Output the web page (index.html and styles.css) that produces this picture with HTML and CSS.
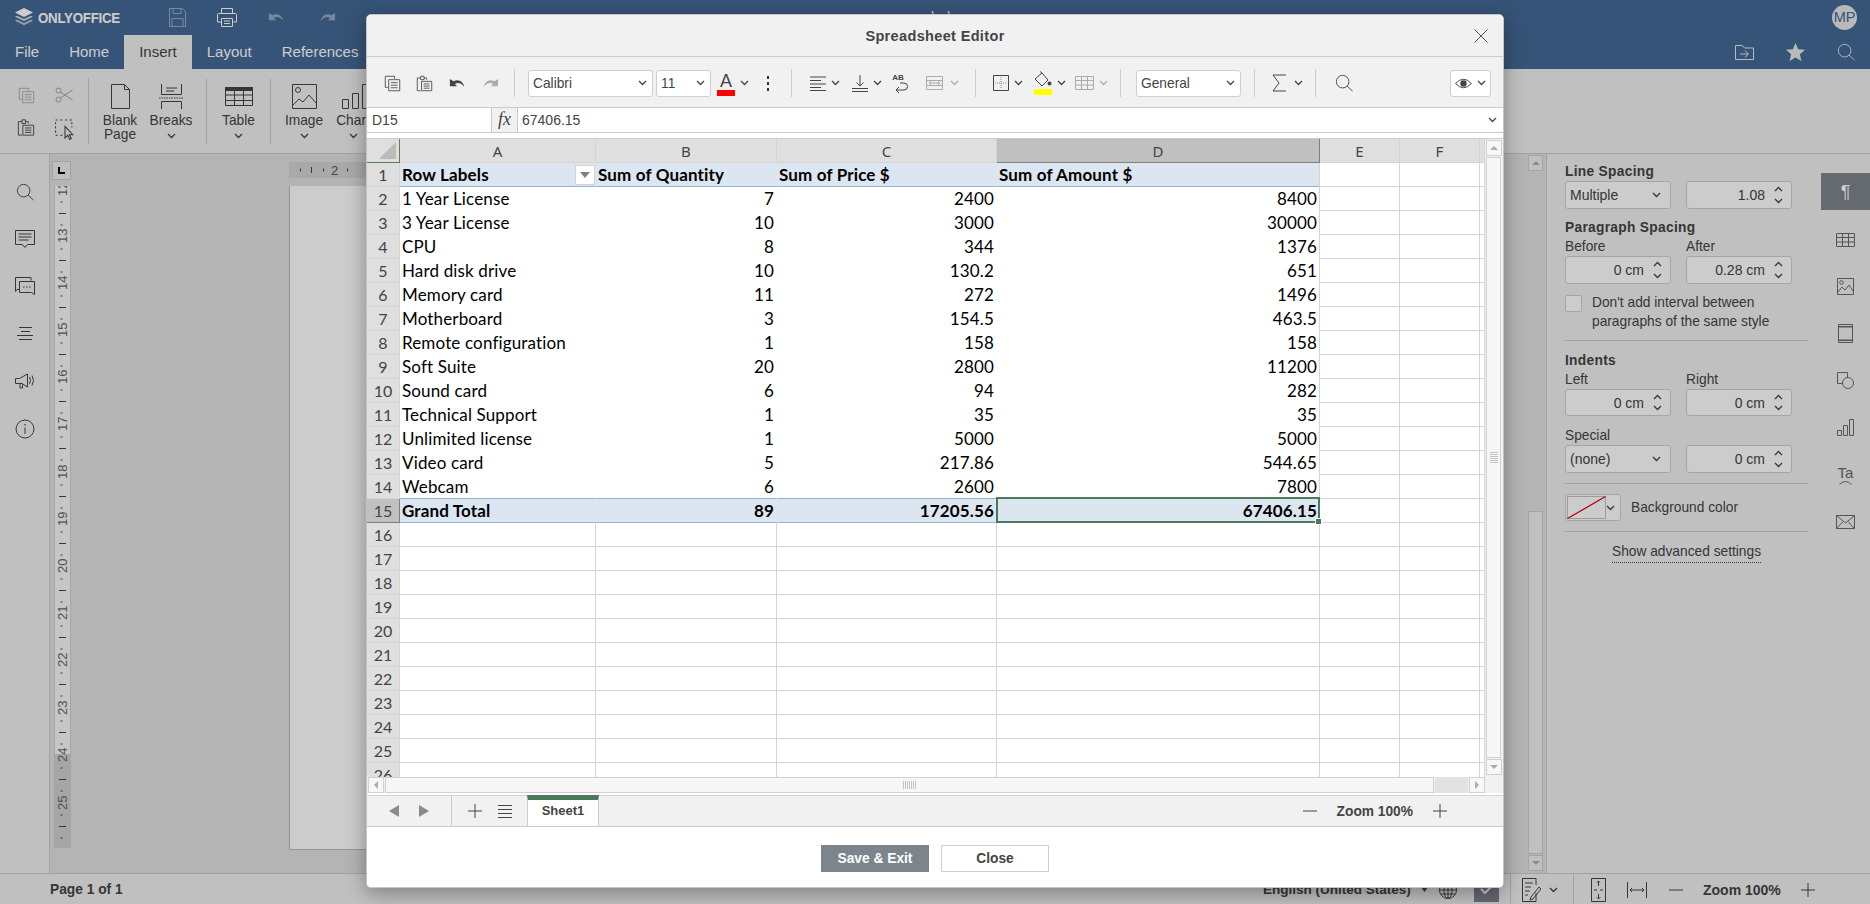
FILE: index.html
```html
<!DOCTYPE html>
<html lang="en">
<head>
<meta charset="utf-8">
<title>ONLYOFFICE Document Editor</title>
<link rel="stylesheet" href="styles.css">
</head>
<body>
<svg class="defs" width="0" height="0" aria-hidden="true">
  <defs>
    <symbol id="chev" viewBox="0 0 9 6"><path d="M1 1l3.500 3.500L8 1" fill="none" stroke="currentColor" stroke-width="1.300"/></symbol>
    <symbol id="chev-up" viewBox="0 0 9 6"><path d="M1 5l3.500-3.500L8 5" fill="none" stroke="currentColor" stroke-width="1.300"/></symbol>
    <symbol id="copy" viewBox="0 0 20 20"><path d="M1.500 1.500h11v3M1.500 1.500v13h3M5.500 5.500h13v13h-13zM8 9h8M8 12h8M8 15h8" fill="none" stroke="currentColor"/></symbol>
    <symbol id="paste" viewBox="0 0 20 20"><path d="M5.500 3.500h-4v15h4M9.500 3.500h3v2M5.500 1.500h4v4h-4zM6.500 7.500h12v11h-12zM9 10.500h7M9 13h7M9 15.500h7" fill="none" stroke="currentColor"/></symbol>
    <symbol id="undo" viewBox="0 0 20 14"><path d="M1 2v8h8L6.500 7.500C10 5.500 14 6.500 17 11 16 5 11 1.500 5 4.500z" fill="currentColor"/></symbol>
    <symbol id="redo" viewBox="0 0 20 14"><path d="M19 2v8h-8l2.500-2.500C10 5.500 6 6.500 3 11 4 5 9 1.500 15 4.500z" fill="currentColor"/></symbol>
    <symbol id="search" viewBox="0 0 20 20"><circle cx="8.500" cy="8.500" r="7" fill="none" stroke="currentColor"/><path d="M13.500 13.500l6 5.500" stroke="currentColor" fill="none"/></symbol>
    <symbol id="plus" viewBox="0 0 14 14"><path d="M7 0v14M0 7h14" stroke="currentColor" fill="none"/></symbol>
    <symbol id="minus" viewBox="0 0 14 14"><path d="M0 7h14" stroke="currentColor" fill="none"/></symbol>
  </defs>
</svg>

<div class="app">
  <header class="head">
    <div class="head-top">
      <div class="logo">
        <svg width="18" height="20" viewBox="0 0 18 20"><path d="M9 0l9 4.500L9 9 0 4.500z" fill="#fff"/><path d="M2 7.700L9 11l7-3.300 2 1L9 13 0 8.700z" fill="#d8dfe8"/><path d="M2 11.700L9 15l7-3.300 2 1L9 17.200 0 12.700z" fill="#b9c5d4"/></svg>
        <span class="logo-text">ONLYOFFICE</span>
      </div>
      <div class="quick">
        <svg class="dimmed" width="17" height="19" viewBox="0 0 17 19"><path d="M.5.5h13l3 3v15H.5zM4 .5v5h8v-5M3 18.500v-8h11v8" fill="none" stroke="currentColor"/></svg>
        <svg width="20" height="19" viewBox="0 0 20 19"><path d="M4.500 6V.5h11V6M4.500 14h-4V6.500q0-1 1-1h17q1 0 1 1V14h-4M4.500 10.500h11v8h-11zM7 13h6M7 15.500h6" fill="none" stroke="currentColor"/></svg>
        <svg class="dimmed" width="18" height="13"><use href="#undo"/></svg>
        <svg class="dimmed" width="18" height="13"><use href="#redo"/></svg>
      </div>
      <div class="doc-title">b.docx</div>
      <div class="avatar">MP</div>
    </div>
    <div class="head-tabs">
      <nav class="tabs">
        <span class="tab">File</span>
        <span class="tab">Home</span>
        <span class="tab active">Insert</span>
        <span class="tab">Layout</span>
        <span class="tab">References</span>
      </nav>
      <div class="head-right">
        <svg width="19" height="16" viewBox="0 0 19 16"><path d="M.5 15.500V1.500h7l2 2.500h9v11.500zM5 10h8M10 6.500l3.500 3.500L10 13.500" fill="none" stroke="currentColor"/></svg>
        <svg width="19" height="18" viewBox="0 0 19 18"><path d="M9.500 0l2.700 6.200 6.800.6-5.100 4.500 1.500 6.700-5.900-3.500L3.600 18l1.500-6.700L0 6.800l6.800-.6z" fill="currentColor"/></svg>
        <svg width="18" height="18"><use href="#search"/></svg>
      </div>
    </div>
  </header>

  <section class="ribbon">
    <div class="rgroup clip">
      <svg class="faded" width="17" height="17"><use href="#copy"/></svg>
      <svg class="faded" width="19" height="16" viewBox="0 0 18 16"><circle cx="3" cy="3.500" r="2.500" fill="none" stroke="currentColor"/><circle cx="3" cy="12.500" r="2.500" fill="none" stroke="currentColor"/><path d="M5 5l12 8M5 11L17 3" fill="none" stroke="currentColor"/></svg>
      <svg class="rpaste" width="18" height="19"><use href="#paste"/></svg>
      <svg width="19" height="21" viewBox="0 0 18 20"><path d="M.5 1h2M5 1h2M9.500 1h2M14 1h2M.5 3v2M.5 7v2M.5 11v2M16 3v2M16 7v1M.5 15.500h2M5 15.500h2" stroke="currentColor" fill="none"/><path d="M9.500 7v11l2.500-2.500 2 4 1.500-1-2-3.500h3.500z" fill="#f1f1f1" stroke="currentColor"/></svg>
    </div>
    <div class="big w60">
      <svg width="19" height="25" viewBox="0 0 19 25"><path d="M.5.500h13l5 5v19H.5zM13.500.500v5h5" fill="none" stroke="currentColor"/></svg>
      <span>Blank<br>Page</span>
    </div>
    <div class="big w44">
      <svg width="25" height="25" viewBox="0 0 25 25"><path d="M2.500 0v10.500h20V0M7 4h11M7 7h8M2.500 25v-7.500h20V25" fill="none" stroke="currentColor"/><path d="M0 14h25" stroke="currentColor" stroke-dasharray="1.500 1" fill="none"/></svg>
      <span>Breaks</span>
      <svg class="ch" width="9" height="6"><use href="#chev"/></svg>
    </div>
    <i class="rdiv r1"></i>
    <div class="big w63">
      <svg class="tblicon" width="28" height="19" viewBox="0 0 28 19"><path d="M0 0h28v4H0z" fill="currentColor"/><path d="M.5.500h27v18H.5zM.5 8h27M.5 13.500h27M9.500 4v14M18.500 4v14" fill="none" stroke="currentColor"/></svg>
      <span>Table</span>
      <svg class="ch" width="9" height="6"><use href="#chev"/></svg>
    </div>
    <i class="rdiv"></i>
    <div class="big w66">
      <svg width="25" height="25" viewBox="0 0 25 25"><path d="M.5.500h24v24H.5z" fill="none" stroke="currentColor"/><circle cx="6" cy="6" r="2.500" fill="none" stroke="currentColor"/><path d="M1 21l6-6 4 3 6-7 7 8" fill="none" stroke="currentColor"/></svg>
      <span>Image</span>
      <svg class="ch" width="9" height="6"><use href="#chev"/></svg>
    </div>
    <div class="big w32">
      <svg class="charticon" width="26" height="25" viewBox="0 0 26 25"><path d="M.5 15.500h6v9h-6zM10.500 9.500h6v15h-6zM20.500.5h5v24h-5z" fill="none" stroke="currentColor"/></svg>
      <span>Chart</span>
      <svg class="ch" width="9" height="6"><use href="#chev"/></svg>
    </div>
  </section>

  <main class="work">
    <aside class="leftbar">
      <svg width="18" height="18"><use href="#search"/></svg>
      <svg width="20" height="18" viewBox="0 0 20 18"><path d="M.5.500h19v14h-7L10 17.500 7.500 14.500h-7zM3.500 4h13M3.500 7h13M3.500 10h10" fill="none" stroke="currentColor"/></svg>
      <svg width="20" height="18" viewBox="0 0 20 18"><path d="M16 3.500V.5H.5v14l1.500-2h2M4.500 4.500h15v13l-3-2h-12zM8 10h1.500M11 10h1.500M14 10h1.500" fill="none" stroke="currentColor"/></svg>
      <svg width="16" height="14" viewBox="0 0 16 14"><path d="M2 .5h13M4 4.500h9M0 8.500h16M2 12.500h13" fill="none" stroke="currentColor"/></svg>
      <svg width="20" height="16" viewBox="0 0 20 16"><path d="M.5 5.500h4L12.500 1v13L7 10.500h-6.500zM5 10.500V15h2.500v-3.500M14.500 4q2 3.500 0 7M17 2.500q3 5 0 10" fill="none" stroke="currentColor"/></svg>
      <svg width="20" height="20" viewBox="0 0 20 20"><circle cx="10" cy="10" r="9" fill="none" stroke="currentColor"/><path d="M10 8.500v6.500" stroke="currentColor" fill="none"/><circle cx="10" cy="5.800" r=".8" fill="currentColor"/></svg>
    </aside>

    <div class="canvas">
      <div class="ruler-col">
        <div class="corner"><svg width="7" height="7" viewBox="0 0 7 7"><path d="M1 0v6h6" fill="none" stroke="#000" stroke-width="2"/></svg></div>
        <svg class="vruler" width="17" height="662" viewBox="0 0 17 662">
          <defs>
            <g id="ticks"><path d="M6.500 11h2M5 22.500h7M6.500 34h2" stroke="#444" fill="none"/></g>
          </defs>
          <rect width="17" height="662" fill="#a9a9a9" class="vr-back"/>
          <rect width="15" height="568" x="1" fill="#f8f8f8" class="vr-page"/>
          <use href="#ticks" y="5"/><use href="#ticks" y="52"/><use href="#ticks" y="99"/><use href="#ticks" y="146"/><use href="#ticks" y="193"/><use href="#ticks" y="240"/><use href="#ticks" y="288"/><use href="#ticks" y="335"/><use href="#ticks" y="382"/><use href="#ticks" y="429"/><use href="#ticks" y="476"/><use href="#ticks" y="524"/><use href="#ticks" y="571"/><use href="#ticks" y="618"/>
          <g class="vr-num">
            <text transform="translate(13 10) rotate(-90)">12</text>
            <text transform="translate(13 57) rotate(-90)">13</text>
            <text transform="translate(13 104) rotate(-90)">14</text>
            <text transform="translate(13 151) rotate(-90)">15</text>
            <text transform="translate(13 198) rotate(-90)">16</text>
            <text transform="translate(13 245) rotate(-90)">17</text>
            <text transform="translate(13 293) rotate(-90)">18</text>
            <text transform="translate(13 340) rotate(-90)">19</text>
            <text transform="translate(13 387) rotate(-90)">20</text>
            <text transform="translate(13 434) rotate(-90)">21</text>
            <text transform="translate(13 481) rotate(-90)">22</text>
            <text transform="translate(13 529) rotate(-90)">23</text>
            <text transform="translate(13 576) rotate(-90)">24</text>
            <text transform="translate(13 624) rotate(-90)">25</text>
          </g>
        </svg>
      </div>
      <div class="page-col">
        <div class="hruler">
          <svg width="76" height="16" viewBox="0 0 76 16"><path d="M11.500 6.500v3M22.500 5v6M34.500 6.500v3M58.500 6.500v3" stroke="#444" fill="none"/><text x="42" y="13" class="hr-num">2</text></svg>
        </div>
        <div class="page"></div>
      </div>
      <div class="vscroll">
        <div class="sbtn"><b class="tri-up"></b></div>
        <div class="sgap"></div>
        <div class="sthumb"></div>
        <div class="sbtn"><b class="tri-down"></b></div>
      </div>
    </div>

    <aside class="panel">
      <h4 class="first">Line Spacing</h4>
      <div class="two mt1">
        <div class="ctl sel">Multiple<svg width="9" height="6"><use href="#chev"/></svg></div>
        <div class="ctl spin">1.08<span class="arrows"><svg width="9" height="6"><use href="#chev-up"/></svg><svg width="9" height="6"><use href="#chev"/></svg></span></div>
      </div>
      <h4 class="para">Paragraph Spacing</h4>
      <div class="two mt3"><label>Before</label><label>After</label></div>
      <div class="two mt1">
        <div class="ctl spin">0 cm<span class="arrows"><svg width="9" height="6"><use href="#chev-up"/></svg><svg width="9" height="6"><use href="#chev"/></svg></span></div>
        <div class="ctl spin">0.28 cm<span class="arrows"><svg width="9" height="6"><use href="#chev-up"/></svg><svg width="9" height="6"><use href="#chev"/></svg></span></div>
      </div>
      <div class="check"><i class="box"></i><span>Don't add interval between<br>paragraphs of the same style</span></div>
      <hr class="hr9">
      <h4 class="ind">Indents</h4>
      <div class="two mt3"><label>Left</label><label>Right</label></div>
      <div class="two mt1">
        <div class="ctl spin h27">0 cm<span class="arrows"><svg width="9" height="6"><use href="#chev-up"/></svg><svg width="9" height="6"><use href="#chev"/></svg></span></div>
        <div class="ctl spin h27">0 cm<span class="arrows"><svg width="9" height="6"><use href="#chev-up"/></svg><svg width="9" height="6"><use href="#chev"/></svg></span></div>
      </div>
      <div class="two mt12"><label>Special</label></div>
      <div class="two mt1">
        <div class="ctl sel">(none)<svg width="9" height="6"><use href="#chev"/></svg></div>
        <div class="ctl spin">0 cm<span class="arrows"><svg width="9" height="6"><use href="#chev-up"/></svg><svg width="9" height="6"><use href="#chev"/></svg></span></div>
      </div>
      <hr>
      <div class="bgrow">
        <div class="swatch">
          <svg width="39" height="23" viewBox="0 0 39 23"><rect x=".5" y=".5" width="38" height="22" fill="#fff" stroke="#c4c4c4"/><path d="M.5 22.500L38.500.5" stroke="#d9000d" stroke-width="1.200"/></svg>
          <svg width="9" height="6"><use href="#chev"/></svg>
        </div>
        <span>Background color</span>
      </div>
      <hr>
      <div class="adv"><span>Show advanced settings</span></div>
    </aside>

    <aside class="righttabs">
      <div class="rtab on"><span class="pilcrow">¶</span></div>
      <div class="rtab"><svg width="19" height="14" viewBox="0 0 19 14"><path d="M.5.5h18v13H.5zM.5 4.500h18M.5 9h18M6.500.5v13M12.500.5v13" fill="none" stroke="currentColor"/></svg></div>
      <div class="rtab"><svg width="17" height="17" viewBox="0 0 17 17"><path d="M.5.5h16v16H.5z" fill="none" stroke="currentColor"/><circle cx="4.500" cy="4.500" r="1.800" fill="none" stroke="currentColor"/><path d="M1 14l4-5 3 3 4-5 4 6" fill="none" stroke="currentColor"/></svg></div>
      <div class="rtab"><svg width="15" height="19" viewBox="0 0 15 19"><path d="M.5.5h14v18H.5z" fill="none" stroke="currentColor"/><path d="M1 2h13v1.500H1zM1 15.500h13V17H1z" fill="currentColor"/></svg></div>
      <div class="rtab"><svg width="17" height="17" viewBox="0 0 17 17"><path d="M6 11.500H.5V.5h10V6" fill="none" stroke="currentColor"/><circle cx="11" cy="11" r="5.500" fill="none" stroke="currentColor"/></svg></div>
      <div class="rtab"><svg width="17" height="17" viewBox="0 0 17 17"><path d="M.5 11.500h4v5h-4zM6.500 6.500h4v10h-4zM12.500.5h4v16h-4z" fill="none" stroke="currentColor"/></svg></div>
      <div class="rtab ta"><span>Ta</span><svg width="13" height="5" viewBox="0 0 13 5"><path d="M.5 4.500Q6.500-1.500 12.500 4.500" fill="none" stroke="currentColor"/></svg></div>
      <div class="rtab"><svg width="19" height="14" viewBox="0 0 19 14"><path d="M.5.5h18v13H.5zM.5.5L9.500 8 18.500.5M.5 13.500L7 6.500M18.500 13.500L12 6.500" fill="none" stroke="currentColor"/></svg></div>
    </aside>
  </main>

  <footer class="status">
    <span class="page-no">Page 1 of 1</span>
    <span class="lang">English (United States)</span>
    <svg class="caret" width="7" height="5" viewBox="0 0 7 5"><path d="M0 0h7L3.500 5z" fill="currentColor"/></svg>
    <svg class="globe" width="18" height="18" viewBox="0 0 18 18"><circle cx="9" cy="9" r="8.500" fill="none" stroke="currentColor"/><ellipse cx="9" cy="9" rx="4" ry="8.500" fill="none" stroke="currentColor"/><path d="M9 0v18M.5 9h17M2 5h14M2 13h14" stroke="currentColor" fill="none"/></svg>
    <div class="spell"><svg width="14" height="11" viewBox="0 0 14 11"><path d="M1 5l4 4 8-8" fill="none" stroke="#fff" stroke-width="2"/></svg></div>
    <i class="sdiv"></i>
    <svg class="review" width="19" height="24" viewBox="0 0 19 24"><path d="M14 7V.5H.5v23H14V15M3 5h8M3 9h6M3 13h5M3 17h3" fill="none" stroke="currentColor"/><path d="M9 19l-1 3 3-1 8-10-2-2z" fill="none" stroke="currentColor"/></svg>
    <svg class="ch2" width="9" height="6"><use href="#chev"/></svg>
    <i class="sdiv"></i>
    <svg class="fitp" width="15" height="24" viewBox="0 0 15 24"><path d="M.5.5h14v23H.5zM7.500 3v5M7.500 16v5M3 12h3M9 12h3M6 4.500L7.500 3 9 4.500M6 19.500L7.500 21 9 19.500" fill="none" stroke="currentColor"/></svg>
    <svg class="fitw" width="20" height="16" viewBox="0 0 20 16"><path d="M.5 0v16M19.500 0v16M3 8h14M5 6L3 8l2 2M15 6l2 2-2 2" fill="none" stroke="currentColor"/></svg>
    <svg class="zm" width="14" height="14"><use href="#minus"/></svg>
    <span class="zoomtxt">Zoom 100%</span>
    <svg class="zp" width="14" height="14"><use href="#plus"/></svg>
  </footer>
</div>

<div class="mask"></div>

<div class="modal">
  <div class="m-title"><span>Spreadsheet Editor</span>
    <svg class="m-close" width="14" height="14" viewBox="0 0 14 14"><path d="M.5.5l13 13M13.500.5l-13 13" stroke="#555" fill="none"/></svg>
  </div>
  <div class="m-tools">
    <span class="ti x392"><svg width="17" height="17"><use href="#copy"/></svg></span>
    <span class="ti x424"><svg width="17" height="19"><use href="#paste"/></svg></span>
    <span class="ti x458"><svg width="18" height="13"><use href="#undo"/></svg></span>
    <span class="ti x490 dis"><svg width="18" height="13"><use href="#redo"/></svg></span>
    <i class="tdiv d1"></i>
    <div class="combo c-font">Calibri<svg width="9" height="6"><use href="#chev"/></svg></div>
    <div class="combo c-size">11<svg width="9" height="6"><use href="#chev"/></svg></div>
    <span class="ti fcolor">A<b></b></span>
    <svg class="tc" width="9" height="6"><use href="#chev"/></svg>
    <span class="dots"><b></b><b></b><b></b></span>
    <i class="tdiv d2"></i>
    <svg class="ti2 a1" width="16" height="15" viewBox="0 0 16 15"><path d="M0 1h16M0 4.500h11M0 8h16M0 11.500h11M0 14.500h16" stroke="currentColor" fill="none"/></svg>
    <svg class="tc" width="9" height="6"><use href="#chev"/></svg>
    <svg class="ti2 a2" width="16" height="17" viewBox="0 0 16 17"><path d="M8 0v11M4.500 7.500L8 11l3.500-3.500M0 13.500h16M0 16.500h16" stroke="currentColor" fill="none"/></svg>
    <svg class="tc" width="9" height="6"><use href="#chev"/></svg>
    <span class="wrap"><em>AB</em><svg width="14" height="11" viewBox="0 0 14 11"><path d="M6 1h4q3.500 0 3.500 3.500T10 8H2M5 5L2 8l3 3" stroke="currentColor" fill="none"/></svg></span>
    <svg class="ti2 merge dis" width="17" height="14" viewBox="0 0 17 14"><path d="M.5.5h16v13H.5zM.5 4.500h16M.5 9.500h16M3 7h11M5 5L3 7l2 2M12 5l2 2-2 2" stroke="currentColor" fill="none"/></svg>
    <svg class="tc tc7 dis" width="9" height="6"><use href="#chev"/></svg>
    <i class="tdiv d3"></i>
    <svg class="ti2 bord" width="16" height="16" viewBox="0 0 16 16"><path d="M.5.5h15v15H.5z" stroke="currentColor" fill="none"/><path d="M8 2v12M2 8h12" stroke="#888" stroke-dasharray="1 1" fill="none"/></svg>
    <svg class="tc" width="9" height="6"><use href="#chev"/></svg>
    <span class="fillc"><svg width="18" height="16" viewBox="0 0 18 16"><path d="M1 8l7-6 6 7-6 6zM6 .5L8 2" fill="none" stroke="currentColor"/><circle cx="15.500" cy="12.500" r="2" fill="currentColor"/></svg><b></b></span>
    <svg class="tc" width="9" height="6"><use href="#chev"/></svg>
    <svg class="ti2 tbl dis" width="19" height="14" viewBox="0 0 19 14"><path d="M.5.5h18v13H.5zM.5 4.500h18M.5 9h18M6.500.5v13M12.500.5v13" fill="none" stroke="currentColor"/></svg>
    <svg class="tc dis" width="9" height="6"><use href="#chev"/></svg>
    <i class="tdiv d4"></i>
    <div class="combo c-num">General<svg width="9" height="6"><use href="#chev"/></svg></div>
    <i class="tdiv d5"></i>
    <svg class="ti2 sigma" width="15" height="18" viewBox="0 0 15 18"><path d="M14 1H1l6 8-6 8h13" fill="none" stroke="currentColor"/></svg>
    <svg class="tc tc7" width="9" height="6"><use href="#chev"/></svg>
    <i class="tdiv d6"></i>
    <svg class="ti2 srch" width="18" height="18"><use href="#search"/></svg>
    <div class="eye"><svg width="17" height="11" viewBox="0 0 17 11"><path d="M.5 5.500Q8.500-3 16.500 5.500 8.500 14 .5 5.500z" fill="none" stroke="currentColor"/><circle cx="8.500" cy="5.500" r="3.200" fill="currentColor"/></svg><svg width="9" height="6"><use href="#chev"/></svg></div>
  </div>
  <div class="m-formula">
    <div class="namebox">D15</div>
    <div class="fx">fx</div>
    <div class="ftext">67406.15</div>
    <svg width="9" height="6"><use href="#chev"/></svg>
  </div>
  <div class="m-sheet">
    <div class="m-grid">
      <div class="grid-clip">
        <table class="sheet">
          <thead>
            <tr><th class="corner-cell"></th><th>A</th><th>B</th><th>C</th><th class="sel-h">D</th><th>E</th><th>F</th><th></th></tr>
          </thead>
          <tbody>
            <tr class="pv-head"><th>1</th><td class="strong filter">Row Labels<span class="fbtn"><b></b></span></td><td class="strong">Sum of Quantity</td><td class="strong">Sum of Price $</td><td class="strong">Sum of Amount $</td><td></td><td></td><td></td></tr>
            <tr class="pv"><th>2</th><td>1 Year License</td><td class="n">7</td><td class="n">2400</td><td class="n">8400</td><td></td><td></td><td></td></tr>
            <tr class="pv"><th>3</th><td>3 Year License</td><td class="n">10</td><td class="n">3000</td><td class="n">30000</td><td></td><td></td><td></td></tr>
            <tr class="pv"><th>4</th><td>CPU</td><td class="n">8</td><td class="n">344</td><td class="n">1376</td><td></td><td></td><td></td></tr>
            <tr class="pv"><th>5</th><td>Hard disk drive</td><td class="n">10</td><td class="n">130.2</td><td class="n">651</td><td></td><td></td><td></td></tr>
            <tr class="pv"><th>6</th><td>Memory card</td><td class="n">11</td><td class="n">272</td><td class="n">1496</td><td></td><td></td><td></td></tr>
            <tr class="pv"><th>7</th><td>Motherboard</td><td class="n">3</td><td class="n">154.5</td><td class="n">463.5</td><td></td><td></td><td></td></tr>
            <tr class="pv"><th>8</th><td>Remote configuration</td><td class="n">1</td><td class="n">158</td><td class="n">158</td><td></td><td></td><td></td></tr>
            <tr class="pv"><th>9</th><td>Soft Suite</td><td class="n">20</td><td class="n">2800</td><td class="n">11200</td><td></td><td></td><td></td></tr>
            <tr class="pv"><th>10</th><td>Sound card</td><td class="n">6</td><td class="n">94</td><td class="n">282</td><td></td><td></td><td></td></tr>
            <tr class="pv"><th>11</th><td>Technical Support</td><td class="n">1</td><td class="n">35</td><td class="n">35</td><td></td><td></td><td></td></tr>
            <tr class="pv"><th>12</th><td>Unlimited license</td><td class="n">1</td><td class="n">5000</td><td class="n">5000</td><td></td><td></td><td></td></tr>
            <tr class="pv"><th>13</th><td>Video card</td><td class="n">5</td><td class="n">217.86</td><td class="n">544.65</td><td></td><td></td><td></td></tr>
            <tr class="pv last"><th>14</th><td>Webcam</td><td class="n">6</td><td class="n">2600</td><td class="n">7800</td><td></td><td></td><td></td></tr>
            <tr class="pv-total"><th class="sel-h">15</th><td class="strong">Grand Total</td><td class="n strong">89</td><td class="n strong">17205.56</td><td class="n strong active-cell">67406.15</td><td></td><td></td><td></td></tr>
            <tr><th>16</th><td></td><td></td><td></td><td></td><td></td><td></td><td></td></tr>
            <tr><th>17</th><td></td><td></td><td></td><td></td><td></td><td></td><td></td></tr>
            <tr><th>18</th><td></td><td></td><td></td><td></td><td></td><td></td><td></td></tr>
            <tr><th>19</th><td></td><td></td><td></td><td></td><td></td><td></td><td></td></tr>
            <tr><th>20</th><td></td><td></td><td></td><td></td><td></td><td></td><td></td></tr>
            <tr><th>21</th><td></td><td></td><td></td><td></td><td></td><td></td><td></td></tr>
            <tr><th>22</th><td></td><td></td><td></td><td></td><td></td><td></td><td></td></tr>
            <tr><th>23</th><td></td><td></td><td></td><td></td><td></td><td></td><td></td></tr>
            <tr><th>24</th><td></td><td></td><td></td><td></td><td></td><td></td><td></td></tr>
            <tr><th>25</th><td></td><td></td><td></td><td></td><td></td><td></td><td></td></tr>
            <tr><th>26</th><td></td><td></td><td></td><td></td><td></td><td></td><td></td></tr>
          </tbody>
        </table>
      </div>
      <div class="g-vscroll">
        <div class="gbtn"><b class="tri-up"></b></div>
        <div class="gthumb"><span class="grip-h"></span></div>
        <div class="gbtn"><b class="tri-down"></b></div>
      </div>
    </div>
    <div class="g-hscroll">
      <div class="gbtn"><b class="tri-left"></b></div>
      <div class="hthumb"><span class="grip-v"></span></div>
      <div class="htrack"></div>
      <div class="gbtn"><b class="tri-right"></b></div>
    </div>
  </div>
  <div class="m-tabs">
    <div class="navs"><b class="nav-l"></b><b class="nav-r"></b></div>
    <div class="acts">
      <svg width="14" height="14"><use href="#plus"/></svg>
      <svg width="14" height="13" viewBox="0 0 14 13"><path d="M0 .5h14M0 4.500h14M0 8.500h14M0 12.500h14" stroke="currentColor" fill="none"/></svg>
    </div>
    <div class="sheet-tab">Sheet1</div>
    <div class="m-zoom">
      <svg width="14" height="14"><use href="#minus"/></svg>
      <span>Zoom 100%</span>
      <svg width="14" height="14"><use href="#plus"/></svg>
    </div>
  </div>
  <div class="m-foot">
    <button class="btn primary">Save &amp; Exit</button>
    <button class="btn">Close</button>
  </div>
</div>
</body>
</html>
```

FILE: styles.css
```css
* { box-sizing: border-box; }
html, body { margin: 0; padding: 0; width: 1870px; height: 904px; overflow: hidden; }
body { font-family: "Liberation Sans", Arial, sans-serif; font-size: 13.75px; color: #444; background: #f1f1f1; position: relative; }
svg { display: block; flex: none; }
.defs { position: absolute; }

.app { width: 1870px; height: 904px; display: flex; flex-direction: column; }

/* header */
.head { background: #446995; color: #fff; height: 69px; flex: none; }
.head-top { height: 35px; display: flex; align-items: center; padding: 0 13px 0 15px; }
.logo { width: 137px; display: flex; align-items: center; gap: 5px; }
.logo-text { font-weight: 700; font-size: 14.5px; letter-spacing: -.3px; transform: scaleX(.92); transform-origin: left; }
.quick { display: grid; grid-template-columns: repeat(4, 50px); justify-items: center; align-items: center; }
.quick .dimmed { opacity: .45; }
.doc-title { flex: 1; text-align: left; font-size: 13.75px; line-height: 16px; padding-left: 579px; }
.avatar { width: 25px; height: 25px; border-radius: 50%; background: #e8e8e8; color: #446995; font-size: 14.5px; line-height: 25px; text-align: center; }
.head-tabs { height: 34px; display: flex; justify-content: space-between; }
.tabs { display: flex; }
.tab { padding: 0 15px; font-size: 15px; line-height: 34px; color: #fff; }
.tab.active { background: #f1f1f1; color: #444; }
.head-right { display: flex; align-items: center; color: #e9e9e9; margin-right: 15px; }
.head-right svg { margin-left: 32px; }

/* ribbon */
.ribbon { height: 85px; flex: none; border-bottom: 1px solid #cbcbcb; background: #f1f1f1; display: flex; overflow: hidden; }
.rgroup.clip { width: 89px; height: 66px; margin-top: 9px; padding: 0 0 0 7px; border-right: 1px solid #cbcbcb; display: grid; grid-template-columns: 38px 38px; grid-template-rows: 34px 34px; align-items: center; justify-items: center; }
.rpaste { margin-bottom: 4px; }
.faded { opacity: .45; }
.big { display: flex; flex-direction: column; align-items: center; padding-top: 15px; font-size: 13.75px; line-height: 14px; text-align: center; }
.big > span { margin-top: 5px; white-space: nowrap; }
.big .ch { margin-top: 5px; }
.tblicon { margin: 3px 0; }
.charticon { margin-left: 4px; }
.w60 { width: 60px; padding-left: 2px; }
.w44 { width: 44px; }
.w63 { width: 63px; }
.w66 { width: 66px; }
.w32 { width: 32px; }
.rdiv { width: 1px; height: 65px; margin-top: 10px; background: #cbcbcb; flex: none; }
.rdiv.r1 { margin-left: 13px; }

/* work area */
.work { height: 719px; flex: none; display: flex; }
.leftbar { width: 50px; flex: none; border-right: 1px solid #cbcbcb; background: #f1f1f1; display: grid; grid-auto-rows: 47.4px; align-content: start; align-items: center; justify-items: center; padding: 14px 0 0; }
.canvas { flex: 1; background: #e2e2e2; display: flex; min-width: 0; }
.ruler-col { width: 239px; flex: none; padding: 7px 0 0 2px; }
.corner { width: 19px; height: 19px; border: 1px solid #cbcbcb; background: #eee; display: flex; align-items: center; justify-content: center; }
.vruler { margin: 6px 0 0 2px; }
.vr-num text { font-size: 13px; fill: #666; font-family: "Liberation Sans", sans-serif; }
.vr-back { fill: #d0d0d0; }
.page-col { flex: 1; min-width: 0; padding-top: 8px; }
.hruler { width: 1000px; height: 16px; background: #d4d4d4; }
.hr-num { font-size: 13px; fill: #555; font-family: "Liberation Sans", sans-serif; }
.page { width: 987px; height: 664px; margin-top: 8px; background: #fff; border: 1px solid #bbb; border-top: 0; }
.vscroll { width: 18px; flex: none; padding: 1px 3px 2px 0; display: flex; flex-direction: column; }
.sbtn { height: 16px; border: 1px solid #cfcfcf; background: #f1f1f1; display: flex; align-items: center; justify-content: center; flex: none; }
.sgap { flex: 1; }
.sthumb { height: 343px; background: #f1f1f1; border: 1px solid #cfcfcf; margin-bottom: 1px; }
.tri-up, .tri-down, .tri-left, .tri-right { display: block; width: 0; height: 0; border-style: solid; border-color: transparent; }
.tri-up { border-width: 0 4px 4px; border-bottom-color: #adadad; }
.tri-down { border-width: 4px 4px 0; border-top-color: #adadad; }
.tri-left { border-width: 4px 4px 4px 0; border-right-color: #adadad; }
.tri-right { border-width: 4px 0 4px 4px; border-left-color: #adadad; }

/* right panel */
.panel { width: 275px; flex: none; border-left: 1px solid #cbcbcb; background: #f1f1f1; padding: 0 12px 0 18px; line-height: 16px; }
.panel h4 { margin: 10px 0 0; font-size: 13.75px; line-height: 16px; font-weight: 700; letter-spacing: .3px; }
.panel h4.first { margin-top: 10px; }
.panel h4.para { margin-top: 11px; }
.panel h4.ind { margin-top: 12px; }
.two { display: grid; grid-template-columns: 106px 106px; column-gap: 15px; }
.mt1 { margin-top: 1px; }
.mt3 { margin-top: 3px; }
.mt12 { margin-top: 12px; }
.panel label { display: block; }
.ctl { height: 28px; background: #fff; border: 1px solid #cfcfcf; border-radius: 3px; font-size: 14px; line-height: 26px; display: flex; align-items: center; position: relative; }
.ctl.h27 { height: 27px; }
.sel { padding: 0 9px 0 4px; justify-content: space-between; }
.spin { justify-content: flex-end; padding-right: 26px; }
.arrows { position: absolute; right: 8px; top: 4px; bottom: 4px; display: flex; flex-direction: column; justify-content: space-between; }
.check { display: flex; margin-top: 9px; line-height: 19px; }
.check .box { width: 17px; height: 17px; margin: 2px 10px 0 0; border: 1px solid #cfcfcf; border-radius: 2px; background: #fff; flex: none; }
.panel hr { border: 0; height: 1px; margin: 10px 0 0; background: #cbcbcb; width: 243px; }
.panel hr.hr9 { margin-top: 9px; }
.bgrow { display: flex; align-items: center; margin-top: 10px; gap: 10px; }
.swatch { width: 56px; height: 27px; border: 1px solid #cfcfcf; border-radius: 3px; background: #fff; display: flex; align-items: center; justify-content: space-between; padding: 0 5px 0 1px; }
.adv { margin-top: 12px; width: 243px; text-align: center; }
.adv span { display: inline-block; border-bottom: 1px dotted #444; padding-bottom: 2px; }
.righttabs { width: 49px; flex: none; background: #f1f1f1; padding-top: 19px; }
.rtab { height: 47px; display: flex; align-items: center; justify-content: center; color: #6b6b6b; flex-direction: column; }
.rtab.on { height: 37px; background: #7d858c; color: #fff; margin-bottom: 6px; }
.pilcrow { font-size: 18px; line-height: 20px; }
.rtab.ta span { font-size: 15px; line-height: 15px; }

/* status bar */
.status { height: 32px; flex: none; border-top: 1px solid #cbcbcb; background: #f1f1f1; display: flex; align-items: center; position: relative; }
.page-no { margin-left: 50px; width: 1213px; font-weight: 700; }
.lang { width: 150px; font-weight: 700; font-size: 13.5px; white-space: nowrap; }
.caret { margin-left: 8px; }
.globe { margin-left: 11px; }
.spell { width: 25px; height: 25px; background: #7d858c; margin-left: 17px; display: flex; align-items: center; justify-content: center; }
.sdiv { width: 1px; height: 31px; background: #cbcbcb; margin-left: 11px; flex: none; }
.review { margin-left: 11px; }
.ch2 { margin-left: 8px; margin-right: 4px; }
.fitp { margin-left: 17px; }
.fitw { margin-left: 21px; }
.zm { margin-left: 22px; }
.zoomtxt { margin-left: 20px; width: 78px; font-weight: 700; font-size: 14px; white-space: nowrap; }
.zp { margin-left: 20px; }

/* mask + modal */
.mask { position: absolute; inset: 0; background: rgba(0, 0, 0, .2); }
.modal { position: absolute; left: 366px; top: 14px; width: 1138px; height: 874px; background: #fff; border: 1px solid #c4c4c4; border-radius: 5px; box-shadow: 0 5px 20px rgba(0, 0, 0, .35); display: flex; flex-direction: column; overflow: hidden; }
.m-title { height: 42px; flex: none; background: #f1f1f1; border-bottom: 1px solid #cbcbcb; display: flex; align-items: center; justify-content: center; font-weight: 700; font-size: 14.5px; letter-spacing: .35px; position: relative; }
.m-close { position: absolute; right: 15px; top: 14px; }
.m-tools { height: 51px; flex: none; background: #f1f1f1; border-bottom: 1px solid #cbcbcb; display: flex; align-items: center; padding: 2px 0 0 17px; }
.ti { display: flex; justify-content: center; width: 17px; }
.x424 { margin-left: 15px; }
.x458 { margin-left: 16px; }
.x490 { margin-left: 15px; }
.dis { opacity: .4; }
.tdiv { width: 1px; height: 28px; background: #cbcbcb; flex: none; }
.d1 { margin-left: 16px; }
.combo { height: 27px; background: #fff; border: 1px solid #cfcfcf; border-radius: 3px; font-size: 13.75px; display: flex; align-items: center; justify-content: space-between; padding: 0 5px 0 4px; }
.c-font { width: 125px; margin-left: 13px; }
.c-size { width: 55px; margin-left: 3px; }
.fcolor { width: 18px; margin-left: 6px; height: 25px; position: relative; font-size: 18px; line-height: 21px; }
.fcolor b { position: absolute; left: 0; right: 0; bottom: 0; height: 6px; background: #f00; }
.tc { margin-left: 5px; }
.tc7 { margin-left: 7px; }
.dots { margin-left: 18px; display: flex; flex-direction: column; gap: 3px; width: 3px; }
.dots b { width: 2px; height: 3px; background: #333; }
.d2 { margin-left: 21px; }
.a1 { margin-left: 18px; }
.a2 { margin-left: 12px; }
.wrap { margin-left: 10px; width: 18px; display: flex; flex-direction: column; align-items: center; }
.wrap em { font-style: normal; font-weight: 700; font-size: 8px; line-height: 8px; margin-left: -6px; }
.merge { margin-left: 16px; }
.d3 { margin-left: 16px; }
.bord { margin-left: 17px; }
.fillc { margin-left: 11px; width: 18px; height: 24px; position: relative; }
.fillc b { position: absolute; left: 0; right: 0; bottom: 0; height: 6px; background: #ff0; }
.tbl { margin-left: 9px; }
.d4 { margin-left: 12px; }
.c-num { width: 105px; margin-left: 15px; }
.d5 { margin-left: 13px; }
.sigma { margin-left: 17px; }
.d6 { margin-left: 12px; }
.srch { margin-left: 19px; }
.eye { width: 41px; height: 27px; margin-left: 97px; background: #fff; border: 1px solid #cfcfcf; border-radius: 3px; display: flex; align-items: center; justify-content: center; gap: 5px; }

.m-formula { height: 25px; flex: none; background: #fff; border-bottom: 1px solid #cbcbcb; display: flex; align-items: center; padding-right: 6px; font-size: 14px; }
.namebox { width: 124px; padding-left: 5px; height: 100%; line-height: 24px; }
.fx { width: 27px; height: 100%; border-left: 1px solid #cbcbcb; border-right: 1px solid #cbcbcb; background: #f1f1f1; font-family: "Liberation Serif", serif; font-style: italic; font-size: 18px; line-height: 22px; text-align: center; }
.ftext { flex: 1; padding-left: 4px; font-size: 14px; }

.m-sheet { height: 655px; flex: none; margin-top: 5px; background: #f1f1f1; border-top: 1px solid #cbcbcb; }
.m-grid { height: 638px; display: flex; }
.grid-clip { width: 1118px; height: 638px; overflow: hidden; background: #fff; flex: none; }
.sheet { table-layout: fixed; width: 1118px; border-collapse: separate; border-spacing: 0; font-family: Lato, "Noto Sans", sans-serif; font-size: 17px; letter-spacing: .15px; color: #000; }
.sheet th, .sheet td { height: 24px; padding: 0; font-weight: 400; border-right: 1px solid #d4d4d4; border-bottom: 1px solid #d4d4d4; white-space: nowrap; overflow: visible; line-height: 22px; }
.sheet th:nth-child(1) { width: 33px; }
.sheet thead th:nth-child(2) { width: 196px; }
.sheet thead th:nth-child(3) { width: 181px; }
.sheet thead th:nth-child(4) { width: 220px; }
.sheet thead th:nth-child(5) { width: 323px; }
.sheet thead th:nth-child(6) { width: 80px; }
.sheet thead th:nth-child(7) { width: 80px; }
.sheet th { background: #dfdfdf; color: #444; text-align: center; font-family: "Noto Sans", sans-serif; font-size: 15px; letter-spacing: 0; }
.sheet tbody th { font-family: Lato, sans-serif; font-size: 16px; }
.sheet td { padding: 1px 2px 0; }
.sheet .n { text-align: right; }
.sheet .strong { font-weight: 700; }
.corner-cell { position: relative; border-right-color: #5f7f4e !important; border-bottom-color: #5f7f4e !important; }
.corner-cell::after { content: ""; position: absolute; right: 3px; bottom: 3px; width: 17px; height: 17px; background: #bbb; clip-path: polygon(100% 0, 100% 100%, 0 100%); }
.sheet th.sel-h { background: #c0c0c0; border-right-color: #7e7e7e; border-bottom-color: #7e7e7e; }
.pv-head td:nth-child(-n+5), .pv-total td:nth-child(-n+5) { background: #dce6f1; border-color: transparent; }
.pv-head td:nth-child(-n+5) { border-bottom-color: #95b3d7; }
.pv-total td:nth-child(-n+5) { border-bottom-color: #95b3d7; }
.pv td:nth-child(-n+4) { border-color: transparent; }
.pv td:nth-child(5) { border-bottom-color: transparent; }
.pv.last td:nth-child(-n+5) { border-bottom-color: #95b3d7; }
.pv-head td:nth-child(5), .pv-total td:nth-child(5) { border-right-color: #d4d4d4; }
.filter { position: relative; }
.fbtn { position: absolute; right: 0; top: 2px; width: 20px; height: 20px; background: #fff; border: 1px solid #d4d4d4; display: flex; align-items: center; justify-content: center; }
.fbtn b { width: 0; height: 0; border-style: solid; border-color: transparent; border-width: 6px 5px 0; border-top-color: #7f7f7f; }
.active-cell { position: relative; }
.active-cell::after { content: ""; position: absolute; left: -1px; top: -2px; right: -1px; bottom: -1px; border: 2px solid #4a7a5b; }
.active-cell::before { content: ""; position: absolute; right: -3px; bottom: -3px; width: 5px; height: 5px; background: #4a7a5b; border: 1px solid #fff; box-sizing: content-box; z-index: 1; }

.g-vscroll { width: 18px; padding: 1px 2px 2px 1px; display: flex; flex-direction: column; gap: 1px; }
.gbtn { width: 16px; height: 16px; flex: none; background: #f7f7f7; border: 1px solid #d0d0d0; display: flex; align-items: center; justify-content: center; }
.gthumb { flex: 1; background: #f7f7f7; border: 1px solid #d0d0d0; display: flex; align-items: center; justify-content: center; }
.grip-h { width: 8px; height: 12px; background: repeating-linear-gradient(#c4c4c4 0 1px, transparent 1px 2px); }
.g-hscroll { height: 16px; display: flex; padding-left: 1px; gap: 1px; background: #f1f1f1; padding-right: 18px; }
.hthumb { width: 1051px; background: #f7f7f7; border: 1px solid #d0d0d0; display: flex; align-items: center; justify-content: center; }
.grip-v { width: 14px; height: 8px; background: repeating-linear-gradient(90deg, #c4c4c4 0 1px, transparent 1px 2px); }
.htrack { width: 33px; background: #e2e2e2; }

.m-tabs { height: 32px; flex: none; margin-top: 2px; background: #f1f1f1; border-top: 1px solid #d4d4d4; border-bottom: 1px solid #cbcbcb; display: flex; align-items: stretch; }
.navs { width: 85px; border-right: 1px solid #cbcbcb; display: flex; align-items: center; padding-left: 22px; gap: 20px; }
.nav-l, .nav-r { width: 0; height: 0; border-style: solid; border-color: transparent; }
.nav-l { border-width: 6px 10px 6px 0; border-right-color: #8a8a8a; }
.nav-r { border-width: 6px 0 6px 10px; border-left-color: #8a8a8a; }
.acts { width: 75px; display: flex; align-items: center; padding-left: 16px; gap: 16px; }
.sheet-tab { width: 72px; background: #fff; border: 1px solid #cbcbcb; border-width: 0 1px; border-top: 5px solid #4a7a5b; margin-top: -1px; font-weight: 700; font-size: 13px; text-align: center; line-height: 21px; }
.m-zoom { margin-left: auto; margin-right: 56px; display: flex; align-items: center; gap: 20px; font-weight: 700; font-size: 13.75px; }
.m-foot { flex: 1; background: #fff; display: flex; justify-content: center; align-items: flex-start; gap: 12px; padding-top: 18px; }
.btn { width: 108px; height: 27px; background: #fff; border: 1px solid #cfcfcf; font-family: "Liberation Sans", sans-serif; font-size: 13.75px; font-weight: 700; color: #444; padding: 0; }
.btn.primary { background: #7d858c; border-color: #7d858c; color: #fff; }
```
